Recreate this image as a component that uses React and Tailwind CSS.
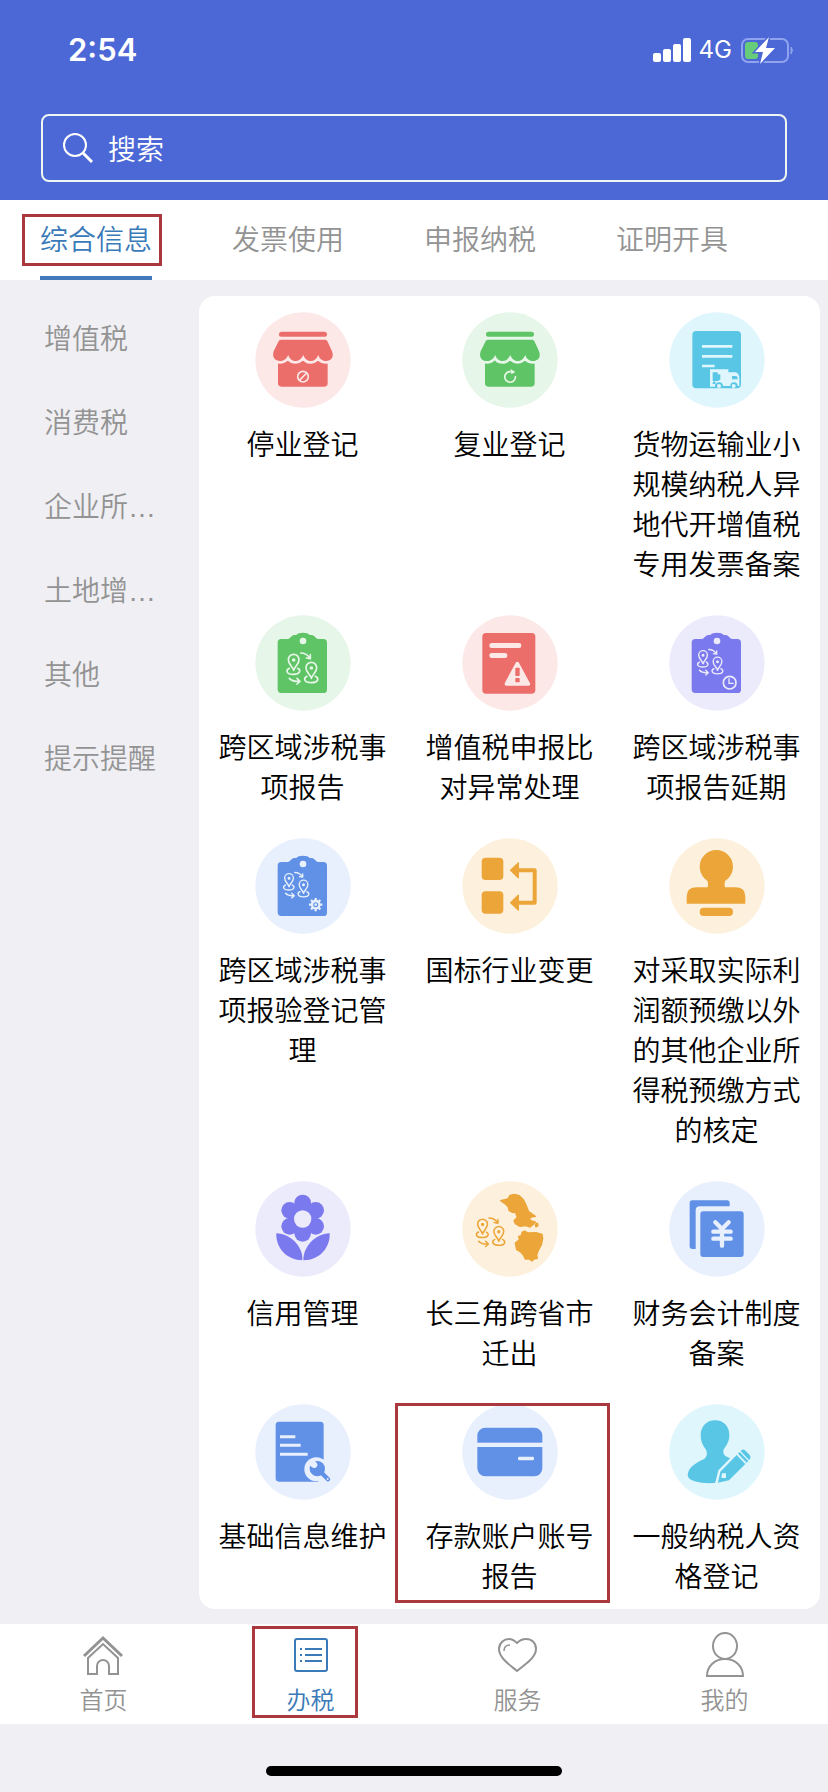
const TABS = ['综合信息', '发票使用', '申报纳税', '证明开具'];

const CATEGORIES = ['增值税', '消费税', '企业所…', '土地增…', '其他', '提示提醒'];

const TINTS = {
  red: '#fde8e8',
  green: '#e6f6e8',
  cyan: '#e0f6fd',
  purple: '#ecebfc',
  blue: '#e8effd',
  orange: '#fdf1dd',
};

const FILLS = {
  red: '#eb6e6a',
  green: '#5fc465',
  cyan: '#5ac6e6',
  purple: '#7b79ee',
  blue: '#6091e6',
  orange: '#eca538',
};

const SERVICES = [
  { title: '停业登记', color: 'red', Icon: ShopStopIcon },
  { title: '复业登记', color: 'green', Icon: ShopResumeIcon },
  { title: '货物运输业小规模纳税人异地代开增值税专用发票备案', color: 'cyan', Icon: TruckDocIcon },
  { title: '跨区域涉税事项报告', color: 'green', Icon: RouteIcon },
  { title: '增值税申报比对异常处理', color: 'red', Icon: WarningDocIcon },
  { title: '跨区域涉税事项报告延期', color: 'purple', Icon: RouteClockIcon },
  { title: '跨区域涉税事项报验登记管理', color: 'blue', Icon: RouteGearIcon },
  { title: '国标行业变更', color: 'orange', Icon: SwapIcon },
  { title: '对采取实际利润额预缴以外的其他企业所得税预缴方式的核定', color: 'orange', Icon: StampIcon },
  { title: '信用管理', color: 'purple', Icon: FlowerIcon },
  { title: '长三角跨省市迁出', color: 'orange', Icon: MapIcon },
  { title: '财务会计制度备案', color: 'blue', Icon: LedgerIcon },
  { title: '基础信息维护', color: 'blue', Icon: WrenchDocIcon },
  { title: '存款账户账号报告', color: 'blue', Icon: BankCardIcon, marked: true },
  { title: '一般纳税人资格登记', color: 'cyan', Icon: PersonPencilIcon },
];

const NAV = [
  { label: '首页', Icon: HomeIcon },
  { label: '办税', Icon: ListIcon, active: true },
  { label: '服务', Icon: HeartIcon },
  { label: '我的', Icon: UserIcon },
];

function Shop({ fill, tint, children }) {
  return (
    <>
      <rect x="72" y="59" width="144" height="16" rx="8" fill={fill} />
      <path d="M69 140H218V214Q218 224 208 224H79Q69 224 69 214Z" fill={fill} />
      <path
        d="M78 83H211Q216 83 218 89L231 118C238 136 228 147 213 147C201 147 193 140 190 129C184 141 178 147 167 147C156 147 149 140 145 129C139 141 132 147 121 147C111 147 103 140 100 129C94 140 88 147 76 147C60 147 50 136 56 118L70 89Q72 83 78 83Z"
        fill={fill}
        stroke={tint}
        strokeWidth="17"
        strokeLinejoin="round"
        paintOrder="stroke"
      />
      {children}
    </>
  );
}

function ShopStopIcon({ fill, tint }) {
  return (
    <Shop fill={fill} tint={tint}>
      <circle cx="144" cy="194" r="16" fill="none" stroke={tint} strokeWidth="5" />
      <path d="M133 205L155 183" stroke={tint} strokeWidth="5" />
    </Shop>
  );
}

function ShopResumeIcon({ fill, tint }) {
  return (
    <Shop fill={fill} tint={tint}>
      <path d="M160 192A16 16 0 1 1 147 179" fill="none" stroke={tint} strokeWidth="5" />
      <path d="M146 171L160 180L148 187Z" fill={tint} />
    </Shop>
  );
}

function TruckDocIcon({ fill, tint }) {
  return (
    <>
      <rect x="70" y="57" width="146" height="172" rx="12" fill={fill} />
      <path d="M99 103H190M99 133H190M99 162H137" stroke={tint} strokeWidth="8" />
      <path d="M123 172H178V181H200Q210 183 211 199V222H206A9 9 0 0 0 184 222H162A10 10 0 0 0 138 224H123Z" fill={tint} />
      <path d="M131 181H146V187H154V203L146 207H131ZM189 192H203L207 202H189Z" fill={fill} />
      <path d="M131 211L139 207V216H131Z" fill={fill} />
      <circle cx="150" cy="222" r="6" fill={tint} />
      <circle cx="194" cy="222" r="6" fill={tint} />
    </>
  );
}

function Pins({ color, transform }) {
  return (
    <g transform={transform} fill="none" stroke={color} strokeWidth="5" strokeLinecap="round" strokeLinejoin="round">
      <path d="M116 166C112 153 100 148 100 134A16 16 0 0 1 132 134C132 148 120 153 116 166Z" />
      <circle cx="116" cy="135" r="3" fill={color} />
      <path d="M103 160C92 165 93 178 115 178S138 165 128 160" />
      <path d="M169 190C165 177 153 172 153 158A16 16 0 0 1 185 158C185 172 173 177 169 190Z" />
      <circle cx="169" cy="159" r="3" fill={color} />
      <path d="M156 184C145 189 146 203 169 203S192 189 181 184" />
      <path d="M137 114C149 114 159 120 165 130M166 119L166 131L154 129" />
      <path d="M103 190C109 197 120 200 134 199M126 190L135 199L126 207" />
    </g>
  );
}

function Clipboard({ fill, tint }) {
  return (
    <>
      <path
        d="M79 72H98C106 72 108 61 118 60H124C130 51 158 51 164 60H170C180 61 182 72 190 72H205Q216 72 216 83V224Q216 234 205 234H79Q68 234 68 223V83Q68 72 79 72Z"
        fill={fill}
      />
      <circle cx="144" cy="78" r="10" fill={tint} />
    </>
  );
}

function RouteIcon({ fill, tint }) {
  return (
    <>
      <Clipboard fill={fill} tint={tint} />
      <Pins color={tint} />
    </>
  );
}

function RouteClockIcon({ fill, tint }) {
  return (
    <>
      <Clipboard fill={fill} tint={tint} />
      <Pins color={tint} transform="translate(7 10) scale(0.82)" />
      <circle cx="182" cy="203" r="19" fill="none" stroke={tint} strokeWidth="5" />
      <path d="M180 190V205H194" fill="none" stroke={tint} strokeWidth="4" />
    </>
  );
}

function RouteGearIcon({ fill, tint }) {
  return (
    <>
      <Clipboard fill={fill} tint={tint} />
      <Pins color={tint} transform="translate(7 10) scale(0.82)" />
      <path
        d="M182 180V220M162 200H202M168 186L196 214M196 186L168 214"
        stroke={tint}
        strokeWidth="7"
      />
      <circle cx="182" cy="200" r="11" fill={fill} stroke={tint} strokeWidth="7" />
      <circle cx="182" cy="200" r="4" fill={tint} />
    </>
  );
}

function WarningDocIcon({ fill, tint }) {
  return (
    <>
      <rect x="61" y="54" width="159" height="182" rx="11" fill={fill} />
      <rect x="82" y="84" width="96" height="15" rx="7" fill={tint} />
      <rect x="82" y="114" width="54" height="15" rx="7" fill={tint} />
      <path d="M166 146L199 207H133Z" fill={tint} stroke={tint} strokeWidth="11" strokeLinejoin="round" />
      <rect x="160" y="158" width="13" height="25" rx="2" fill={fill} />
      <rect x="160" y="189" width="13" height="13" rx="2" fill={fill} />
    </>
  );
}

function SwapIcon({ fill }) {
  return (
    <>
      <rect x="59" y="59" width="65" height="67" rx="12" fill={fill} />
      <rect x="59" y="160" width="65" height="67" rx="12" fill={fill} />
      <path d="M166 97H218V194H166" fill="none" stroke={fill} strokeWidth="12" strokeLinejoin="round" />
      <path d="M146 97L169 75V119ZM146 194L169 172V216Z" fill={fill} stroke={fill} strokeWidth="4" strokeLinejoin="round" />
    </>
  );
}

function StampIcon({ fill }) {
  return (
    <>
      <circle cx="142" cy="86" r="50" fill={fill} />
      <path d="M108 118C118 128 118 138 116 148H83Q53 148 53 176V197H229V176Q229 148 199 148H168C166 138 166 128 176 118Z" fill={fill} />
      <rect x="92" y="209" width="100" height="25" rx="12" fill={fill} />
    </>
  );
}

function FlowerIcon({ fill, tint }) {
  return (
    <>
      <g fill={fill}>
        <circle cx="143" cy="66" r="25" />
        <circle cx="182" cy="88" r="25" />
        <circle cx="182" cy="136" r="25" />
        <circle cx="143" cy="157" r="25" />
        <circle cx="104" cy="136" r="25" />
        <circle cx="104" cy="88" r="25" />
        <circle cx="143" cy="112" r="44" />
      </g>
      <circle cx="143" cy="114" r="26" fill={tint} />
      <path d="M64 157C62 200 94 238 143 238C143 196 108 159 64 157Z" fill={fill} stroke={tint} strokeWidth="6" paintOrder="stroke" />
      <path d="M224 157C226 200 194 238 145 238C145 196 180 159 224 157Z" fill={fill} stroke={tint} strokeWidth="6" paintOrder="stroke" />
    </>
  );
}

function MapIcon({ fill }) {
  return (
    <>
      <g fill={fill} stroke={fill} strokeWidth="4" strokeLinejoin="round">
        <path d="M116 59L137 54L144 43L157 40L172 44L184 56L192 72L200 92L220 106L208 108L202 113L208 120L220 123L213 131L204 138L192 134L174 136L160 128L156 119L166 109L161 95L151 94L141 88L139 78L131 70Z" />
        <path d="M180 154L188 150L198 156L222 155L240 160L242 172L238 192L229 208L224 222L226 232L216 234L210 240L202 234L190 234L184 222L175 212L164 206L160 186L172 176L170 166L178 164Z" />
        <path d="M220 130L226 126L228 134L222 138Z" />
      </g>
      <Pins color={fill} transform="translate(-45 6) scale(0.92)" />
    </>
  );
}

function LedgerIcon({ fill, tint }) {
  return (
    <>
      <path d="M70 58H174Q182 58 182 66V76H92Q80 76 80 88V204H70Q62 204 62 196V66Q62 58 70 58Z" fill={fill} />
      <rect x="94" y="91" width="130" height="137" rx="9" fill={fill} />
      <path
        d="M139 124L159 144L179 124M133 152H185M133 173H185M159 147V194"
        fill="none"
        stroke={tint}
        strokeWidth="13"
        strokeLinecap="round"
      />
    </>
  );
}

function WrenchDocIcon({ fill, tint }) {
  return (
    <>
      <rect x="62" y="53" width="144" height="180" rx="10" fill={fill} />
      <path d="M75 98H121M75 124H137M75 151H158" stroke={tint} strokeWidth="9" />
      <circle cx="184" cy="196" r="36" fill={tint} />
      <path d="M190 234H210V210H190Z" fill={tint} />
      <circle cx="187" cy="194" r="23" fill={fill} />
      <path d="M160 180L174 166L186 178Q190 187 182 191Q176 194 170 189Z" fill={tint} />
      <path d="M198 205L219 226" stroke={fill} strokeWidth="13" strokeLinecap="round" />
      <circle cx="218" cy="225" r="3" fill={tint} />
    </>
  );
}

function BankCardIcon({ fill, tint }) {
  return (
    <>
      <rect x="46" y="71" width="195" height="146" rx="24" fill={fill} />
      <rect x="40" y="116" width="207" height="13" fill={tint} />
      <rect x="168" y="158" width="48" height="11" rx="4" fill={tint} />
    </>
  );
}

function PersonPencilIcon({ fill, tint }) {
  return (
    <>
      <path
        d="M138 49C165 49 181 68 181 94C181 112 174 122 166 133C161 141 162 150 168 155L186 164L150 200L138 237C100 239 58 234 56 214C57 190 82 176 104 166C115 160 116 146 110 136C101 124 95 112 95 94C95 68 112 49 138 49Z"
        fill={fill}
      />
      <path
        d="M147 236L154 203L203 153L229 180L180 229Z"
        fill={fill}
        stroke={tint}
        strokeWidth="14"
        strokeLinejoin="round"
        paintOrder="stroke"
      />
      <path d="M207 149L212 144L238 171L233 176Z" fill={fill} />
      <path d="M215 141L218 138Q223 134 228 139L242 153Q247 159 243 165L240 168Z" fill={fill} />
      <path d="M159 208H171V222H157Z" fill={tint} />
    </>
  );
}

function HomeIcon() {
  return (
    <svg viewBox="0 0 48 48" className="size-12" fill="none" stroke="currentColor" strokeWidth="2">
      <path d="M4 25L23 7L42 25" strokeWidth="3" />
      <path d="M8 27V43H17V35A6 6 0 0 1 29 35V43H38V27L23 13Z" />
    </svg>
  );
}

function ListIcon() {
  return (
    <svg viewBox="0 0 48 48" className="size-12" fill="none" stroke="currentColor" strokeWidth="2">
      <rect x="8" y="8" width="32" height="32" rx="2" />
      <path d="M18 18H35M18 24H35M18 30H35" />
      <path d="M13 18H15M13 24H15M13 30H15" />
    </svg>
  );
}

function HeartIcon() {
  return (
    <svg viewBox="0 0 48 48" className="size-12" fill="none" stroke="currentColor" strokeWidth="2" strokeLinejoin="round">
      <path d="M23 40C16 34 5 27 5 18C5 12 10 8 15 8C19 8 21 10 23 12C25 10 28 8 32 8C38 8 42 12 42 18C42 27 30 34 23 40Z" />
      <path d="M10 20C10 16 12 14 16 14" strokeWidth="1.5" />
    </svg>
  );
}

function UserIcon() {
  return (
    <svg viewBox="0 0 48 48" className="size-12" fill="none" stroke="currentColor" strokeWidth="2">
      <ellipse cx="24" cy="15" rx="12" ry="13" />
      <path d="M6 45C6 35 14 28 24 28S42 35 42 45Z" />
    </svg>
  );
}

function StatusBar() {
  return (
    <div className="flex h-[114px] items-start justify-between pt-[30px] pr-[34px] pl-[68px]">
      <time className="font-[Inter] text-[31px] leading-10 font-semibold">2:54</time>
      <div className="flex h-10 items-center gap-2">
        <svg viewBox="0 0 38 24" className="h-6 w-[38px]" fill="currentColor">
          <rect x="0" y="15" width="8" height="9" rx="2" />
          <rect x="10" y="11" width="8" height="13" rx="2" />
          <rect x="20" y="6" width="8" height="18" rx="2" />
          <rect x="30" y="0" width="8" height="24" rx="2" />
        </svg>
        <span className="font-[Inter] text-2xl font-normal">4G</span>
        <svg viewBox="0 0 54 28" className="h-7 w-[54px]">
          <rect x="2" y="3" width="46" height="23" rx="6" fill="none" stroke="#8fa3ee" strokeWidth="2" />
          <path d="M51 11Q54 14 51 18Z" fill="#8fa3ee" stroke="#8fa3ee" strokeWidth="1" />
          <rect x="5" y="6" width="13" height="17" rx="3" fill="#66cc79" />
          <path d="M29 1L15 16H23L20 28L35 12H26Z" fill="#fff" stroke="#4c67d6" strokeWidth="3" paintOrder="stroke" />
        </svg>
      </div>
    </div>
  );
}

function Marker({ className }) {
  return <span aria-hidden="true" className={`pointer-events-none absolute border-[3px] border-[#ab383f] ${className}`} />;
}

function ServiceItem({ title, color, Icon, marked }) {
  return (
    <button type="button" className="relative flex flex-col items-center gap-[15px]">
      <svg viewBox="0 0 288 288" className="size-24" aria-hidden="true">
        <circle cx="144" cy="144" r="143" fill={TINTS[color]} />
        <Icon fill={FILLS[color]} tint={TINTS[color]} />
      </svg>
      <span className="w-[168px] text-[28px] leading-10 text-black">{title}</span>
      {marked && <Marker className="-top-px right-[3px] -bottom-2 -left-[11px]" />}
    </button>
  );
}

export default function App() {
  return (
    <div className="min-h-screen bg-[#efeff4] font-['Noto_Sans_CJK_SC',sans-serif] font-[350]" lang="zh-CN">
      <header className="bg-[#4c67d6] pb-[18px] text-white">
        <StatusBar />
        <label className="mx-[41px] flex h-[68px] items-center gap-[13px] rounded-lg border-2 border-[#eef6f0] px-[18px]">
          <svg viewBox="0 0 34 34" className="size-[34px]" fill="none" stroke="currentColor" strokeWidth="2">
            <circle cx="14" cy="14" r="11" />
            <path d="M22 22L31 31" strokeWidth="3" />
          </svg>
          <input type="search" placeholder="搜索" aria-label="搜索" className="min-w-0 flex-1 bg-transparent text-[28px] leading-10 outline-none placeholder:text-white" />
        </label>
      </header>

      <nav className="flex h-20 bg-white">
        {TABS.map((tab, i) => (
          <button key={tab} type="button" className={`relative flex w-48 justify-center text-[28px] leading-[76px] ${i === 0 ? 'text-[#3b7ab8]' : 'text-[#939393]'}`}>
            <span className={i === 0 ? 'border-b-4 border-[#4478bd]' : ''}>{tab}</span>
            {i === 0 && <Marker className="top-[14px] right-[30px] left-[22px] h-[52px]" />}
          </button>
        ))}
      </nav>

      <main className="flex pt-4 pr-2 pb-[15px]">
        <aside className="w-[199px] shrink-0 pt-0.5 font-['Liberation_Sans','Noto_Sans_CJK_SC',sans-serif]">
          {CATEGORIES.map((name) => (
            <button key={name} type="button" className="block w-full pl-11 text-left text-[28px] leading-[84px] text-[#939393]">
              {name}
            </button>
          ))}
        </aside>
        <section className="grid flex-1 grid-cols-3 items-start gap-y-8 rounded-2xl bg-white pt-4 pb-[14px]">
          {SERVICES.map((s) => (
            <ServiceItem key={s.title} {...s} />
          ))}
        </section>
      </main>

      <footer>
        <nav className="grid h-[100px] grid-cols-4 bg-white">
          {NAV.map(({ label, Icon, active }) => (
            <a key={label} href="#" className={`relative flex flex-col items-center pt-[7px] ${active ? 'text-[#3b7ab8]' : 'text-[#939393]'}`}>
              <Icon />
              <span className="text-2xl leading-10">{label}</span>
              {active && <Marker className="top-[2px] right-[56px] bottom-[6px] left-[45px]" />}
            </a>
          ))}
        </nav>
        <div className="flex justify-center pt-[42px] pb-4">
          <div className="h-[10px] w-[296px] rounded-full bg-black" />
        </div>
      </footer>
    </div>
  );
}
